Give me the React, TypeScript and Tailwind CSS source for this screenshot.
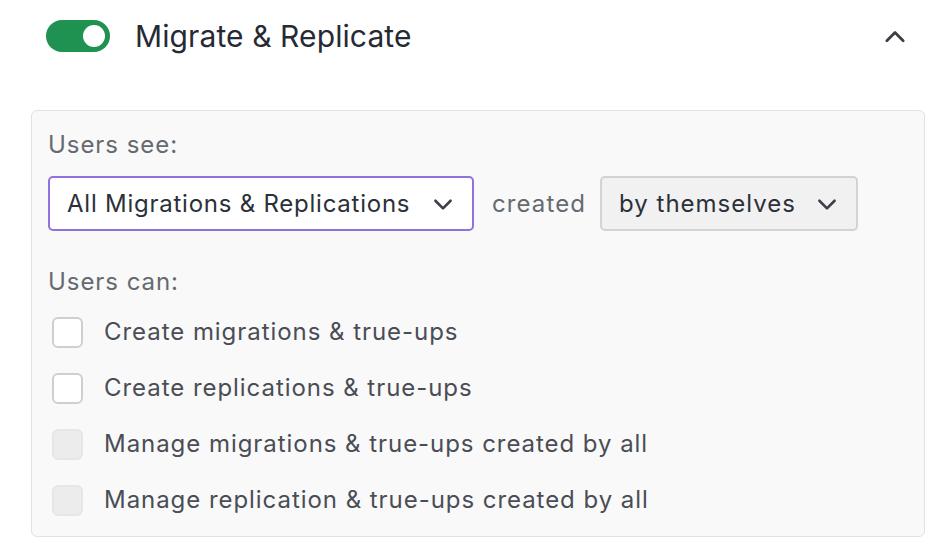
import React from "react";

function ChevronDown({ className = "" }: { className?: string }) {
  return (
    <svg viewBox="0 0 24 24" className={className} fill="none" stroke="currentColor" strokeWidth={2.4} strokeLinecap="round" strokeLinejoin="round">
      <path d="M5 9l7 7 7-7" />
    </svg>
  );
}

function ChevronUp({ className = "" }: { className?: string }) {
  return (
    <svg viewBox="0 0 24 24" className={className} fill="none" stroke="currentColor" strokeWidth={2.4} strokeLinecap="round" strokeLinejoin="round">
      <path d="M5 16l7-7 7 7" />
    </svg>
  );
}

function Checkbox({ disabled = false, label }: { disabled?: boolean; label: string }) {
  return (
    <label className="flex items-center h-[56px]">
      <span
        className={
          disabled
            ? "ml-[4px] w-[31px] h-[31px] rounded-[6px] border-2 border-[#e6e6e6] bg-[#ececec]"
            : "ml-[4px] w-[31px] h-[31px] rounded-[6px] border-2 border-[#cfcfcf] bg-white"
        }
      />
      <span className="ml-[21px] text-[24px] tracking-[0.95px] text-[#4a4d55]">{label}</span>
    </label>
  );
}

export default function App() {
  return (
    <div
      className="w-[952px] h-[560px] bg-white pl-[31px] pr-[27px] overflow-hidden"
      style={{ fontFamily: "Inter, 'Noto Sans', sans-serif" }}
    >
      {/* Section header with on/off switch */}
      <div className="h-[72px] flex items-center">
        <div className="ml-[15px] w-[64px] h-[32px] rounded-full bg-[#1f9150] flex items-center justify-end pr-[5px]">
          <span className="w-[22px] h-[22px] rounded-full bg-white" />
        </div>
        <span className="ml-[25px] text-[30px] tracking-[0.1px] text-[#262a33]">Migrate &amp; Replicate</span>
        <ChevronUp className="ml-auto mr-[16px] w-[28px] h-[28px] text-[#3a3d44]" />
      </div>

      {/* Permissions panel */}
      <div className="mt-[38px] h-[427px] rounded-[6px] border border-[#e2e2e2] bg-[#f9f9f9] pl-[16px] pt-[18px]">
        <div className="text-[24px] tracking-[0.95px] text-[#666a70] leading-[32px]">Users see:</div>
        <div className="mt-[15px] flex items-center">
          <div className="w-[426px] h-[55px] rounded-[5px] border-2 border-[#8f72dd] bg-white flex items-center pl-[17px] pr-[16px]">
            <span className="text-[24px] tracking-[0.76px] text-[#2c3038]">All Migrations &amp; Replications</span>
            <ChevronDown className="ml-auto w-[26px] h-[26px] text-[#3d4047]" />
          </div>
          <span className="ml-[18px] text-[24px] tracking-[1.1px] text-[#666a70]">created</span>
          <div className="ml-[14px] w-[258px] h-[55px] rounded-[5px] border-2 border-[#d3d3d3] bg-[#f1f1f1] flex items-center pl-[17px] pr-[16px]">
            <span className="text-[24px] tracking-[1px] text-[#2c3038]">by themselves</span>
            <ChevronDown className="ml-auto w-[26px] h-[26px] text-[#3d4047]" />
          </div>
        </div>
        <div className="mt-[35px] text-[24px] tracking-[0.95px] text-[#666a70] leading-[32px]">Users can:</div>
        <div className="mt-[6px] flex flex-col">
          <Checkbox label="Create migrations & true-ups" />
          <Checkbox label="Create replications & true-ups" />
          <Checkbox disabled label="Manage migrations & true-ups created by all" />
          <Checkbox disabled label="Manage replication & true-ups created by all" />
        </div>
      </div>
    </div>
  );
}
